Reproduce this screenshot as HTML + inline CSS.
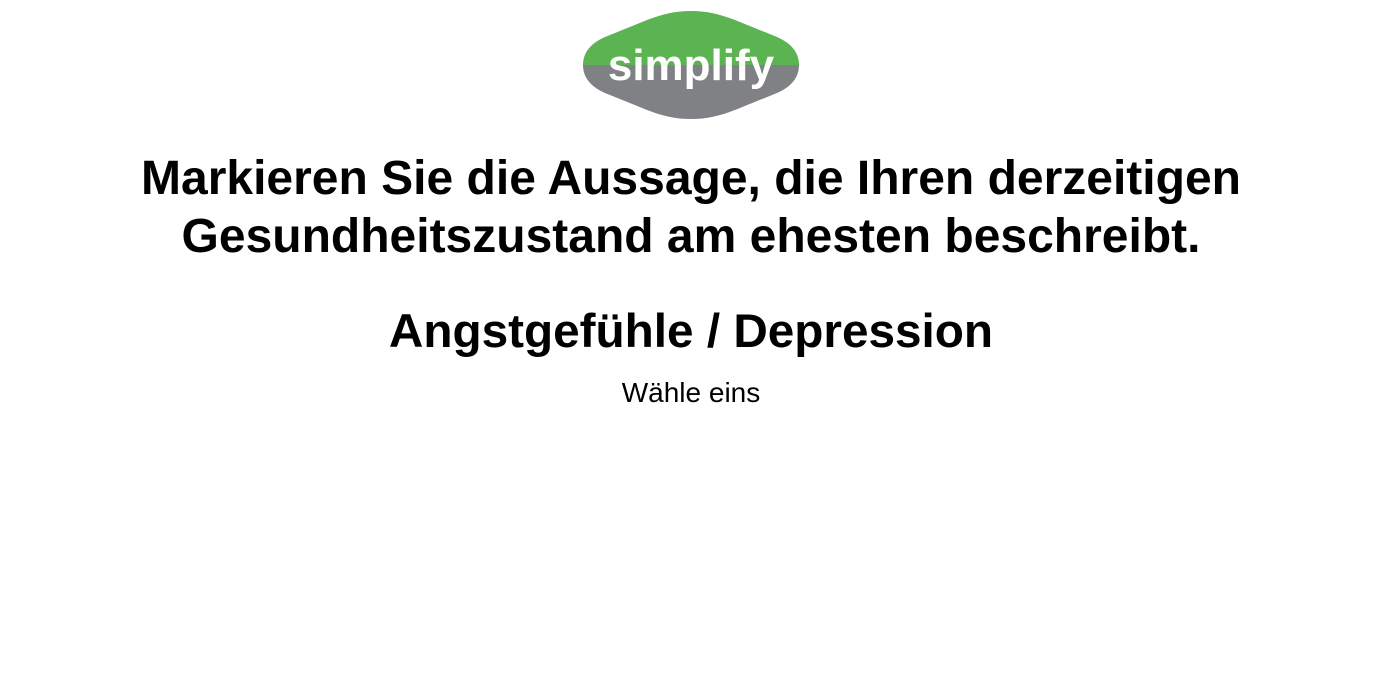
<!DOCTYPE html>
<html><head><meta charset="utf-8"><style>
body{margin:0;background:#fff;font-family:"Liberation Sans",Arial,sans-serif;color:#000;width:1382px;height:683px;overflow:hidden;position:relative}
.t{position:absolute;left:0;width:1382px;text-align:center;white-space:nowrap}
</style></head><body>
<svg style="position:absolute;left:583px;top:10px" width="216" height="110" viewBox="0 0 216 110">
<defs><clipPath id="c"><path d="M108 1 C92 1 80 4 64 10 L22 27 C6 34 0 44 0 55 C0 66 6 76 22 83 L64 100 C80 106 92 109 108 109 C124 109 136 106 152 100 L194 83 C210 76 216 66 216 55 C216 44 210 34 194 27 L152 10 C136 4 124 1 108 1Z"/></clipPath></defs>
<g clip-path="url(#c)"><rect width="216" height="55" fill="#5bb451"/><rect y="55" width="216" height="55" fill="#808184"/></g>
<text x="108" y="70" text-anchor="middle" font-family="Liberation Sans,sans-serif" font-weight="bold" font-size="44" fill="#fff" letter-spacing="0">simplify</text>
</svg>
<div class="t" style="top:150px;font-size:48px;font-weight:bold;line-height:58px">Markieren Sie die Aussage, die Ihren derzeitigen<br>Gesundheitszustand am ehesten beschreibt.</div>
<div class="t" style="top:303px;font-size:47.7px;font-weight:bold;line-height:58px">Angstgefühle / Depression</div>
<div class="t" style="top:376px;font-size:28px;line-height:34px">Wähle eins</div>
</body></html>
